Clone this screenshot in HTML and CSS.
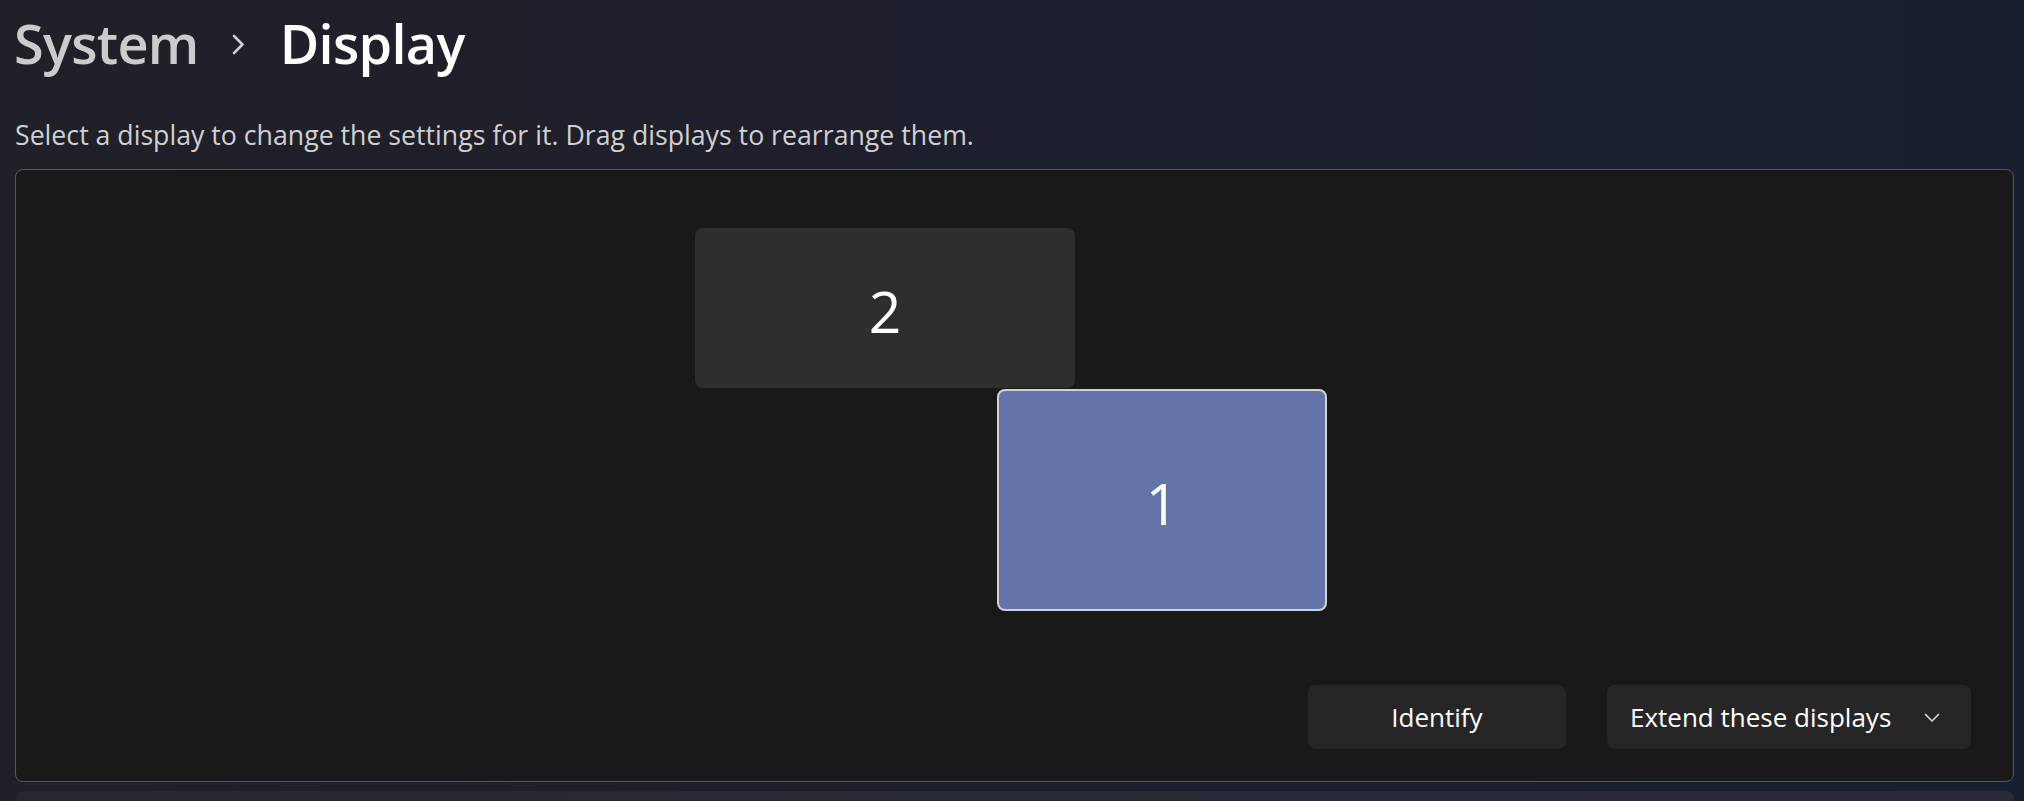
FILE: index.html
```html
<!DOCTYPE html>
<html lang="en">
<head>
<meta charset="utf-8">
<title>System › Display</title>
<link rel="stylesheet" href="styles.css">
</head>
<body>
<div class="page">
  <header class="breadcrumb">
    <span class="crumb crumb-parent">System</span>
    <svg class="crumb-sep" width="13" height="21" viewBox="0 0 13 21" aria-hidden="true"><path d="M2 2 L10.5 10.5 L2 19" fill="none" stroke="#cfcfcf" stroke-width="2.6" stroke-linecap="round" stroke-linejoin="round"/></svg>
    <span class="crumb crumb-current">Display</span>
  </header>
  <p class="hint">Select a display to change the settings for it. Drag displays to rearrange them.</p>
  <section class="arrange">
    <div class="monitor monitor-2">2</div>
    <div class="monitor monitor-1 is-selected">1</div>
    <div class="actions">
      <button class="btn btn-identify" type="button">Identify</button>
      <button class="btn btn-dropdown" type="button"><span>Extend these displays</span><svg class="dd-chevron" width="16" height="10" viewBox="0 0 16 10" aria-hidden="true"><path d="M1.5 1.5 L8 8 L14.5 1.5" fill="none" stroke="#d6d6d6" stroke-width="1.7" stroke-linecap="round" stroke-linejoin="round"/></svg></button>
    </div>
  </section>
  <section class="next-card"></section>
</div>
</body>
</html>
```

FILE: styles.css
```css
* {
  box-sizing: border-box;
}

html, body {
  margin: 0;
  padding: 0;
  height: 100%;
}

body {
  background: linear-gradient(90deg, #202028 0%, #1e1f2c 45%, #1b1f2f 75%, #1a1f30 100%);
  font-family: "Open Sans", "Noto Sans", sans-serif;
  color: #ffffff;
  overflow: hidden;
}

.page {
  padding: 7px 10px 0 15px;
}

.breadcrumb {
  display: flex;
  align-items: center;
  height: 72px;
  margin-left: -1px;
}

.crumb {
  font-size: 54px;
  font-weight: 600;
  line-height: 72px;
  letter-spacing: -0.7px;
}

.crumb-parent {
  color: #cbcbcb;
}

.crumb-current {
  color: #ffffff;
}

.crumb-sep {
  margin: 2px 35px 0 33px;
  flex: none;
}

.hint {
  margin: 38px 0 0 0;
  font-size: 26.7px;
  line-height: 36px;
  color: #d0d0d0;
}

.arrange {
  position: relative;
  margin-top: 16px;
  height: 613px;
  background: #191919;
  border: 1px solid #55575f;
  border-radius: 8px;
  display: flex;
  flex-direction: column;
  justify-content: flex-end;
  padding: 0 42px 32px 0;
}

.monitor {
  position: absolute;
  display: flex;
  align-items: center;
  justify-content: center;
  font-size: 57px;
  font-weight: 400;
  color: #ffffff;
  border-radius: 8px;
  padding-top: 6px;
}

.monitor-2 {
  left: 679px;
  top: 58px;
  width: 380px;
  height: 160px;
  background: #2e2e2e;
}

.monitor-1 {
  left: 981px;
  top: 219px;
  width: 330px;
  height: 222px;
  background: #6374a8;
}

.monitor-1.is-selected {
  border: 2px solid #d2d2d2;
}

.actions {
  display: flex;
  justify-content: flex-end;
  gap: 41px;
}

.btn {
  height: 64px;
  border: none;
  border-radius: 8px;
  background: #262626;
  color: #ffffff;
  font-family: "Open Sans", "Noto Sans", sans-serif;
  font-size: 26px;
  line-height: 36px;
  padding: 0;
}

.btn-identify {
  width: 258px;
}

.btn-dropdown {
  width: 364px;
  display: flex;
  align-items: center;
  justify-content: space-between;
  padding: 0 31px 0 23px;
}

.dd-chevron {
  flex: none;
  margin-top: 2px;
}

.next-card {
  margin-top: 9px;
  margin-left: 2px;
  height: 40px;
  background: linear-gradient(90deg, #27272f 0%, #272a36 60%, #292b38 100%);
  border-radius: 8px 8px 0 0;
}
```
